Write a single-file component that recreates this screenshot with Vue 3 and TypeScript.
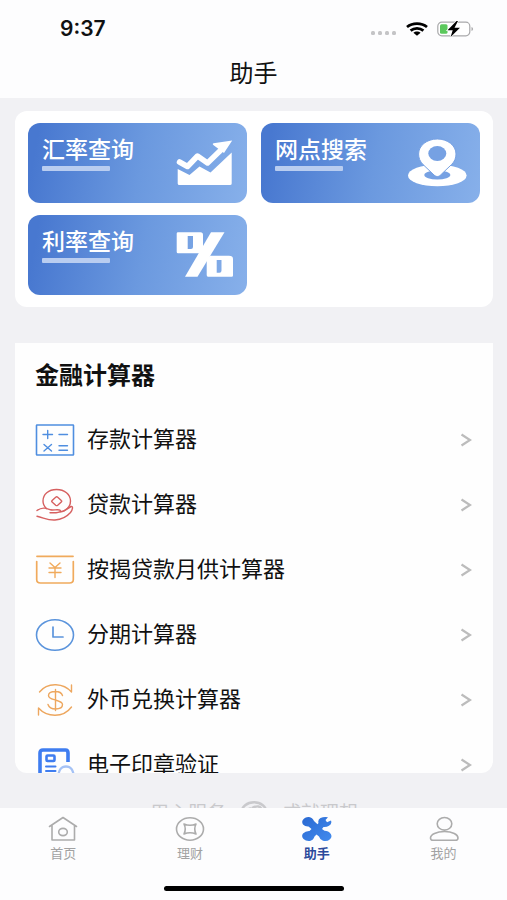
<script setup lang="ts">
interface Tile {
  id: string
  label: string
}

interface Tool {
  id: string
  label: string
}

interface Tab {
  id: string
  label: string
  active?: boolean
}

const tiles: Tile[] = [
  { id: 'rate', label: '汇率查询' },
  { id: 'branch', label: '网点搜索' },
  { id: 'interest', label: '利率查询' },
]

const tools: Tool[] = [
  { id: 'deposit', label: '存款计算器' },
  { id: 'loan', label: '贷款计算器' },
  { id: 'mortgage', label: '按揭贷款月供计算器' },
  { id: 'instalment', label: '分期计算器' },
  { id: 'currency', label: '外币兑换计算器' },
  { id: 'seal', label: '电子印章验证' },
]

const tabs: Tab[] = [
  { id: 'home', label: '首页' },
  { id: 'wealth', label: '理财' },
  { id: 'assistant', label: '助手', active: true },
  { id: 'mine', label: '我的' },
]
</script>

<template>
  <div class="app">
    <header class="header">
      <div class="status">
        <span class="time">9:37</span>
        <div class="status-icons">
          <svg width="26" height="6" viewBox="0 0 26 6" fill="#c4c4c6" aria-hidden="true">
            <rect x="0" y="1" width="4" height="4" rx="1.5" />
            <rect x="7" y="1" width="4" height="4" rx="1.5" />
            <rect x="14" y="1" width="4" height="4" rx="1.5" />
            <rect x="21" y="1" width="4" height="4" rx="1.5" />
          </svg>
          <svg width="22" height="14" viewBox="0 0 22 14" fill="none" stroke="#000" stroke-width="2.8" aria-hidden="true">
            <path d="M1 5C6.5 .6 15.5 .6 21 5" />
            <path d="M4.600 8.600C8.300 5.500 13.700 5.500 17.400 8.600" />
            <path d="M7.400 10.800C9.400 9 12.600 9 14.600 10.800L11 13.800Z" fill="#000" stroke="none" />
          </svg>
          <svg width="37" height="16" viewBox="0 0 37 16" aria-hidden="true">
            <rect x="0.800" y="1.200" width="32" height="13.600" rx="4" fill="#fff" stroke="#a9a9ab" stroke-width="1.200" />
            <path d="M34.500 6v4q1.600-.6 1.600-2t-1.600-2Z" fill="#a9a9ab" />
            <rect x="3" y="3.200" width="7.500" height="9.600" rx="1.500" fill="#5bc85c" />
            <path d="M19.500 0L10.500 9.300h5.200L13.600 16 23 6.700h-5.500L21 0Z" fill="#000" stroke="#fff" stroke-width="1.400" paint-order="stroke" />
          </svg>
        </div>
      </div>
      <h1 class="title">助手</h1>
    </header>

    <main class="content">
      <section class="tiles">
        <button v-for="tile in tiles" :key="tile.id" type="button" class="tile">
          <span class="tile-label">{{ tile.label }}</span>
          <svg class="tile-icon" width="60" height="50" viewBox="0 0 60 50" aria-hidden="true">
            <g v-if="tile.id === 'rate'" fill="#fff">
              <path d="M4.500 24L12.500 28.500 22.500 18 32.500 25 48 10" fill="none" stroke="#fff" stroke-width="5.500" stroke-linecap="round" stroke-linejoin="round" />
              <path d="M57.200 2.400L38.500 5.200q-1.600.8-.2 1.800L49 15Z" />
              <path d="M2.700 31L14.500 37 24.500 28.500 35.500 34.500 56.700 14.500V45.500Q56.700 47 55 47H4.400Q2.700 47 2.700 45.500Z" />
            </g>
            <g v-else-if="tile.id === 'branch'">
              <ellipse cx="29.300" cy="37.500" rx="29.300" ry="10.800" fill="#fff" />
              <ellipse cx="29.300" cy="37" rx="13" ry="4.600" fill="#76a1e3" />
              <path d="M29.300 38.500C27.500 38.500 26.500 37.500 25 36L15 26.500C12 23.500 10.600 20 10.600 16C10.600 7.500 19 1 29.300 1S48 7.500 48 16C48 20 46.600 23.500 43.600 26.500L33.600 36C32.100 37.500 31.100 38.500 29.300 38.500Z" fill="#fff" stroke="#76a1e3" stroke-width="1" />
              <ellipse cx="29.300" cy="15.500" rx="9" ry="7.500" fill="#76a1e3" />
            </g>
            <g v-else fill="#fff">
              <path fill-rule="evenodd" d="M3 2.300H25.500Q28 2.300 28 5V20L24.500 23.300H3Q1.700 23.300 1.700 22V3.600Q1.700 2.300 3 2.300ZM12.700 6V19H16Q18 19 18 17V6Z" />
              <path d="M36 2.300H49.500L22.500 46.700H10Z" />
              <path fill-rule="evenodd" d="M35 25.700H54Q58 25.700 58 29V45.500Q58 46.700 56.700 46.700H33Q31.700 46.700 31.700 45V29ZM41.700 30V42.700H44.500Q46.500 42.700 46.500 40.500V30Z" />
            </g>
          </svg>
        </button>
      </section>

      <section class="tools">
        <h2 class="tools-title">金融计算器</h2>
        <ul class="tool-list">
          <li v-for="tool in tools" :key="tool.id">
            <a class="tool" href="#">
              <svg class="tool-icon" width="40" height="34" viewBox="0 0 40 34" fill="none" stroke-width="1.400" stroke-linecap="round" stroke-linejoin="round" aria-hidden="true">
                <g v-if="tool.id === 'deposit'" stroke="#4f8ee0">
                  <rect x="1.500" y="2" width="37" height="30" rx="0.500" stroke-width="1.600" />
                  <path d="M8 11.500h9.500M12.700 7.500v8M24 11.500h8.500M9 21.500l7.500 6.500M16.500 21.500L9 28M24 22.700h8.500M24 27.300h8.500" />
                </g>
                <g v-else-if="tool.id === 'loan'" stroke="#d66060">
                  <path d="M11.500 20.500C8.800 18.200 8 15.800 8 13C8 6.500 13.500 1.500 21.500 1.500S35.500 6.500 35.500 13C35.500 17.500 33 20.800 29 22.800" />
                  <path d="M20.700 9.200q1-.8 2 0l3.600 3.300q.8.700 0 1.400l-3.600 3.300q-1 .8-2 0l-3.600-3.300q-.8-.7 0-1.400Z" />
                  <path d="M2 22.500C7.500 18.500 12 20.500 15.500 21.800C18.500 22.500 23 21 25 22.200C26.500 23.600 24 24.500 21 24.700H15M25 24C30 23.500 33 20 36 18.500C38.500 18 37.500 22 35.500 24.500C32 28.500 27 31.500 20 32C12.500 32.500 8.500 29.500 2 28.300" />
                </g>
                <g v-else-if="tool.id === 'mortgage'" stroke="#f0aa5c">
                  <path d="M2 3.300h36" stroke-width="1.800" />
                  <path d="M1.700 8.500V26.500Q1.700 30 5.500 30H34.500Q38.300 30 38.300 26.500V8.500" stroke-width="1.700" />
                  <path d="M15 10l5 4.500 5-4.500M14 15h12M14 19.500h12M20 14.500v10" />
                </g>
                <g v-else-if="tool.id === 'instalment'" stroke="#5b94dc">
                  <ellipse cx="20" cy="17" rx="18.500" ry="15.300" stroke-width="1.600" />
                  <path d="M18 9v10h10" stroke-width="1.700" />
                </g>
                <g v-else-if="tool.id === 'currency'" stroke="#eda75f">
                  <path d="M4.500 9C9.500 2.500 16 1.500 21 1.700C28 2 33 5 36.500 9V2M36.500 24C32 30 26.500 32.300 20 32.300C13.500 32.300 8 30 3.500 25V32" />
                  <path d="M27.500 12.500C26.500 9.500 24 8.500 20.500 8.500C16 8.500 13.500 10.200 13.500 12.500C13.500 15.500 17 16 20.500 17S27.500 19 27.500 21.500C27.500 24.500 24.500 26 20.500 26S14 24.500 13 21.500M20.500 6.500v21" />
                </g>
                <g v-else>
                  <path d="M5 34V5Q5 2 8 2H30.500Q33 2 33 5V14" stroke="#3f7df0" stroke-width="3.600" stroke-linecap="butt" />
                  <rect x="11.500" y="7.500" width="8" height="5.500" rx="1" stroke="#3f7df0" stroke-width="2.600" />
                  <path d="M11 18.500h9.500M11 23h9.500" stroke="#3f7df0" stroke-width="2" />
                  <path d="M23.500 28C23.500 22 26.500 18.500 31 18.500S38.500 22 38.500 28" stroke="#a5c2f5" stroke-width="2.400" />
                </g>
              </svg>
              <span class="tool-label">{{ tool.label }}</span>
              <svg width="12" height="14" viewBox="0 0 12 14" fill="none" stroke="#bcbcbc" stroke-width="2.200" aria-hidden="true">
                <path d="M1.500 1.500l8.500 5.500-8.500 5.500" />
              </svg>
            </a>
          </li>
        </ul>
      </section>

      <footer class="slogan">
        <span>用心服务</span>
        <svg width="28" height="24" viewBox="0 0 28 24" fill="none" stroke="#c9c9cc" stroke-width="2.400" aria-hidden="true">
          <ellipse cx="14" cy="11.500" rx="12.500" ry="10.300" />
          <path d="M6 11C10 5 14 8 12 12M12 7Q20 3 22 9Q20 15 13 16" />
        </svg>
        <span>成就理想</span>
      </footer>
    </main>

    <nav class="tabbar">
      <div class="tabs">
        <a v-for="tab in tabs" :key="tab.id" href="#" class="tab" :class="{ active: tab.active }">
          <svg width="30" height="26" viewBox="0 0 30 26" fill="none" stroke="#acacac" stroke-width="1.600" stroke-linejoin="round" stroke-linecap="round" aria-hidden="true">
            <g v-if="tab.id === 'home'">
              <path d="M1.500 10.500L15 1.500 28.500 10.500M4 9.500V24H26.500V9.500" />
              <ellipse cx="15" cy="16" rx="4.300" ry="3.600" />
            </g>
            <g v-else-if="tab.id === 'wealth'">
              <ellipse cx="15" cy="13" rx="13.500" ry="11.200" />
              <path d="M9 8Q15 10.500 21 8Q18.500 13 21 18Q15 15.500 9 18Q11.500 13 9 8Z" />
            </g>
            <g v-else-if="tab.id === 'assistant'" stroke="none">
              <defs>
                <linearGradient id="toolGradient" x1="0" y1="0" x2="1" y2="1">
                  <stop offset="0" stop-color="#2a69d2" />
                  <stop offset="1" stop-color="#428bee" />
                </linearGradient>
              </defs>
              <path
                fill="url(#toolGradient)"
                d="M.8 4Q3 .8 7 1Q10.500 1.500 12 5L15.500 8.200L16.500 7Q15.500 3.500 18.500 2Q22 .3 26 1.200L23.500 4L25 6.200L29 4.500Q30.300 8 27 9.800Q24.500 11.300 21.500 11L20 13L22.500 14.800Q26.500 14.800 28.800 18Q30.500 21 28 23.200Q25 26 21 24.700Q17.500 23 17 20.500L14.500 18.500L12.500 20.500Q11.500 24 8 25Q4 25.500 1.500 23Q-1 20.500 1 17.500Q3.500 14.800 7.500 15L9.500 13L6.500 10.500Q3 10.700 1 8.500Q-.5 6 .8 4Z"
              />
            </g>
            <g v-else>
              <ellipse cx="15.500" cy="7.800" rx="7.300" ry="6.300" />
              <path d="M1.500 22C1.500 18.500 7.500 15.500 15.500 15.500S29 18.500 29 22Q29 24.300 26.500 24.300H4Q1.500 24.300 1.500 22Z" />
            </g>
          </svg>
          <span>{{ tab.label }}</span>
        </a>
      </div>
      <div class="home-indicator"></div>
    </nav>
  </div>
</template>

<style>
body {
  margin: 0;
  background: #f1f1f4;
}
</style>

<style scoped>
.app {
  display: flex;
  flex-direction: column;
  height: 100vh;
  overflow: hidden;
  background: #f1f1f4;
  color: #111;
  font-family: "Liberation Sans", "Noto Sans CJK SC", sans-serif;
}

.header {
  flex: none;
  padding-bottom: 8px;
  background: #fdfdfe;
}

.status {
  display: flex;
  align-items: center;
  justify-content: space-between;
  height: 58px;
  padding: 0 33px 0 60px;
}

.time {
  font-family: Inter, "Liberation Sans", sans-serif;
  font-size: 21px;
  font-weight: 600;
  line-height: 24px;
}

.status-icons {
  display: flex;
  align-items: center;
  gap: 9px;
}

.status-icons svg:first-child {
  margin-top: 8px;
}

.title {
  margin: 0;
  font-size: 24px;
  font-weight: 400;
  line-height: 32px;
  text-align: center;
}

.content {
  display: flex;
  flex: 1;
  flex-direction: column;
  min-height: 0;
  padding: 13px 14px 0 15px;
}

.tiles {
  display: grid;
  flex: none;
  grid-template-columns: 1fr 1fr;
  gap: 12px 14px;
  padding: 12px 13px;
  margin-bottom: 36px;
  border-radius: 12px;
  background: #fff;
}

.tile {
  display: flex;
  align-items: flex-start;
  justify-content: space-between;
  height: 80px;
  padding: 15px 12px 0 14px;
  border: 0;
  border-radius: 12px;
  background: linear-gradient(100deg, #4878d0 5%, #6b99df 52%, #87b0ea 100%);
  color: #fff;
  font: inherit;
}

.tile-label {
  font-size: 23px;
  font-weight: 500;
  line-height: 24px;
}

.tile-label::after {
  display: block;
  width: 68px;
  height: 5px;
  margin-top: 4px;
  border-radius: 1px;
  background: #b9cdf0;
  content: "";
}

.tools {
  flex: 1;
  min-height: 0;
  overflow: hidden;
  border-radius: 0 0 12px 12px;
  background: #fefefe;
}

.tools-title {
  margin: 0;
  padding: 18px 20px 16px;
  font-size: 24px;
  font-weight: 700;
  line-height: 30px;
}

.tool-list {
  margin: 0;
  padding: 0;
  list-style: none;
}

.tool {
  display: flex;
  align-items: center;
  height: 65px;
  padding: 0 21px 0 20px;
  color: inherit;
  text-decoration: none;
}

.tool-label {
  flex: 1;
  margin-left: 12px;
  font-size: 22px;
  line-height: 30px;
}

.slogan {
  display: flex;
  flex: none;
  justify-content: center;
  gap: 14px;
  height: 7px;
  padding-top: 28px;
  overflow: hidden;
  color: #c9c9cc;
  font-size: 19px;
  line-height: 26px;
}

.tabbar {
  flex: none;
  background: #fdfdfe;
}

.tabs {
  display: grid;
  grid-template-columns: repeat(4, 1fr);
  height: 78px;
}

.tab {
  display: flex;
  flex-direction: column;
  align-items: center;
  gap: 4px;
  padding-top: 8px;
  color: #a2a2a2;
  font-size: 13px;
  line-height: 16px;
  text-decoration: none;
}

.active {
  color: #2b4a9b;
  font-weight: 700;
}

.home-indicator {
  width: 180px;
  height: 5px;
  margin: 0 auto 9px;
  border-radius: 3px;
  background: #000;
}
</style>
